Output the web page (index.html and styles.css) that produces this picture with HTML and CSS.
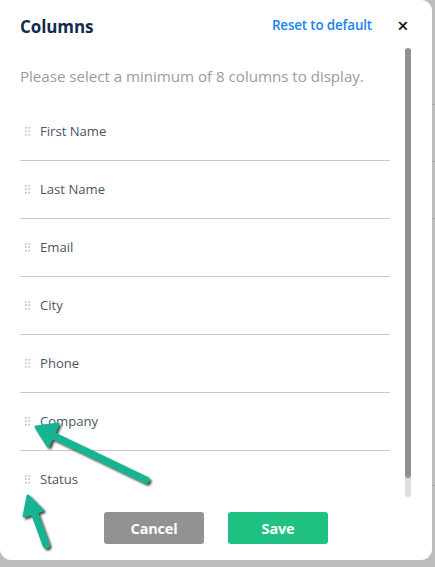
FILE: index.html
```
<!DOCTYPE html>
<html>
<head>
<meta charset="utf-8">
<link rel="stylesheet" href="styles.css">
</head>
<body>
<div class="modal">
  <div class="header">
    <h2 class="title">Columns</h2>
    <a class="reset">Reset to default</a>
    <span class="close">&#x2715;</span>
  </div>
  <div class="body">
    <div class="content">
      <p class="desc">Please select a minimum of 8 columns to display.</p>
      <ul class="list">
        <li class="row"><span class="grip"></span>First Name</li>
        <li class="row"><span class="grip"></span>Last Name</li>
        <li class="row"><span class="grip"></span>Email</li>
        <li class="row"><span class="grip"></span>City</li>
        <li class="row"><span class="grip"></span>Phone</li>
        <li class="row"><span class="grip"></span>Company</li>
        <li class="row"><span class="grip"></span>Status</li>
      </ul>
    </div>
    <div class="scrollbar"><div class="thumb"></div></div>
  </div>
  <div class="footer">
    <button class="btn cancel">Cancel</button>
    <button class="btn save">Save</button>
  </div>
</div>
<svg class="arrows" width="435" height="567" viewBox="0 0 435 567">
  <defs>
    <filter id="sh" x="-20%" y="-20%" width="140%" height="140%">
      <feDropShadow dx="2" dy="2" stdDeviation="1.2" flood-color="#1a2a26" flood-opacity="0.85"/>
    </filter>
  </defs>
  <g filter="url(#sh)" fill="#17b493" stroke="#17b493" stroke-linejoin="round" stroke-linecap="round">
    <line x1="146" y1="480" x2="52" y2="435" stroke-width="7"/>
    <polygon points="36,427 58,424 48,446" stroke-width="3"/>
    <line x1="46" y1="545" x2="34" y2="512" stroke-width="7"/>
    <polygon points="28,496 42,510 24,516" stroke-width="3"/>
  </g>
</svg>
</body>
</html>
```
FILE: styles.css
```
* { box-sizing: border-box; }
html, body { margin: 0; padding: 0; }
body {
  width: 435px;
  height: 567px;
  overflow: hidden;
  background-color: #bdbdbd;
  background-image:
    linear-gradient(#a9a9a9, #a9a9a9),
    linear-gradient(#a9a9a9, #a9a9a9),
    linear-gradient(#a9a9a9, #a9a9a9),
    linear-gradient(#a9a9a9, #a9a9a9);
  background-size: 100% 1px;
  background-repeat: no-repeat;
  background-position: 0 104px, 0 161px, 0 218px, 0 485px;
  font-family: "Open Sans", "Noto Sans", sans-serif;
  position: relative;
}
.modal {
  width: 432px;
  height: 560px;
  background: #fff;
  border-radius: 0 11px 11px 11px;
  display: flex;
  flex-direction: column;
}
.header {
  height: 48px;
  display: flex;
  align-items: center;
  padding: 0 0 0 20px;
}
.title {
  margin: 0;
  font-size: 17px;
  font-weight: 700;
  color: #0f2c4d;
  flex: 1;
  padding-top: 5px;
  letter-spacing: -0.1px;
}
.reset {
  font-size: 13.4px;
  font-weight: 600;
  color: #1a84f0;
  padding-top: 2px;
  margin-right: 2px;
  letter-spacing: -0.15px;
}
.close {
  width: 58px;
  text-align: center;
  font-size: 14px;
  font-weight: 400;
  color: #111;
  padding-top: 2px;
  -webkit-text-stroke: 0.4px #111;
}
.body {
  height: 449px;
  display: flex;
  padding-left: 20px;
}
.content {
  width: 370px;
  overflow: hidden;
}
.scrollbar {
  width: 6px;
  margin-left: 15px;
  height: 449px;
  background: #dedede;
  border-radius: 3px;
}
.thumb {
  height: 430px;
  background: #909090;
  border-radius: 3px;
}
.desc {
  margin: 18px 0 17px;
  font-size: 15.2px;
  line-height: 20px;
  color: #9c9c9c;
  letter-spacing: -0.05px;
  white-space: nowrap;
}
.list {
  list-style: none;
  margin: 0;
  padding: 0;
}
.row {
  height: 58px;
  display: flex;
  align-items: center;
  border-bottom: 1px solid #c9c9c9;
  font-size: 13.1px;
  color: #4b5566;
  padding-bottom: 2px;
}
.row:last-child { border-bottom: none; }
.grip {
  width: 7px;
  height: 10px;
  margin: 0 9px 0 4px;
  background-image: radial-gradient(circle, #c4c4c4 0.9px, transparent 1.1px);
  background-size: 3.5px 3.5px;
}
.footer {
  flex: 1;
  display: flex;
  justify-content: center;
  align-items: flex-start;
  gap: 24px;
  padding-top: 15px;
}
.btn {
  width: 100px;
  height: 32px;
  border: none;
  border-radius: 3px;
  color: #fff;
  font-family: "Open Sans", "Noto Sans", sans-serif;
  font-size: 14.5px;
  font-weight: 700;
  letter-spacing: -0.2px;
}
.cancel { background: #929292; }
.save { background: #21c183; }
.arrows {
  position: absolute;
  left: 0;
  top: 0;
  pointer-events: none;
}
```
